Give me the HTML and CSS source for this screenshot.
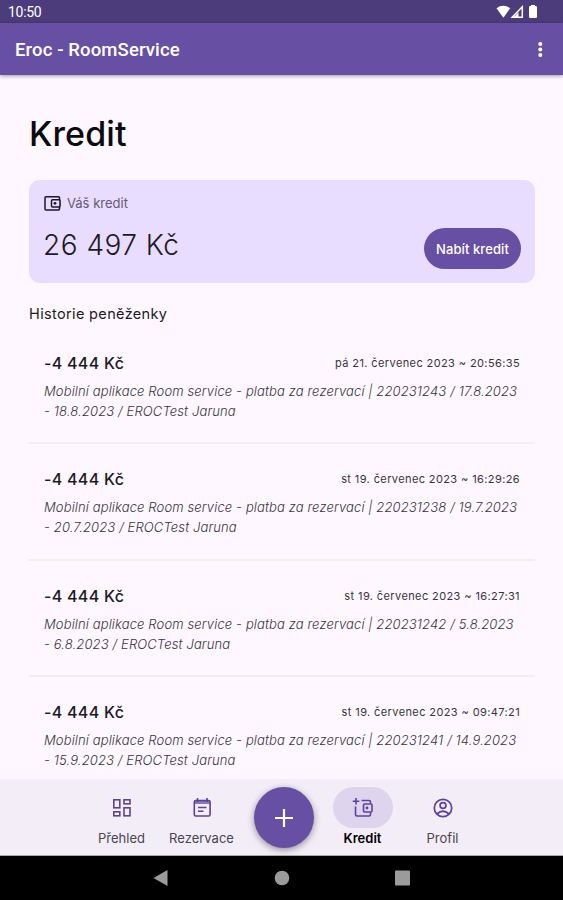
FILE: index.html
```html
<!DOCTYPE html>
<html lang="cs">
<head>
    <meta charset="UTF-8">
    <title>Eroc - RoomService</title>
    <link rel="stylesheet" href="styles.css">
</head>
<body>
    <div class="status-bar">
        <span class="clock">10:50</span>
        <svg class="status-icons" width="44" height="14" viewBox="0 0 44 14">
            <path d="M0.500 3.200Q7.300-1.600 14.200 3.200L7.400 12.800Z"/>
            <path d="M26.300 1.800V12.200H16.200Z" fill="none" stroke="#fff" stroke-width="1.500"/>
            <path d="M22.500 7.200V12H18Z"/>
            <rect x="35" y="0" width="4" height="2"/>
            <rect x="33" y="1" width="8" height="12" rx="1.200"/>
        </svg>
    </div>

    <header class="app-bar">
        <h1>Eroc - RoomService</h1>
        <svg class="menu-icon" width="6" height="18" viewBox="0 0 6 18">
            <circle cx="3.300" cy="3.100" r="2"/>
            <circle cx="3.300" cy="8.600" r="2"/>
            <circle cx="3.300" cy="14.100" r="2"/>
        </svg>
    </header>

    <main class="content">
        <h2>Kredit</h2>

        <section class="card">
            <div>
                <div class="card-label">
                    <svg width="17" height="16" viewBox="0 0 17 16" fill="none" stroke="#1d192b">
                        <rect x="1" y="1.700" width="14.500" height="13.300" rx="1" stroke-width="1.500"/>
                        <rect x="7.500" y="4.700" width="8.500" height="7.300" rx="1" fill="#e8ddff" stroke-width="1.500"/>
                        <circle cx="11" cy="8.300" r="1.400" fill="#1d192b" stroke="none"/>
                    </svg>
                    <span>Váš kredit</span>
                </div>
                <div class="balance">26 497 Kč</div>
            </div>
            <button class="charge">Nabít kredit</button>
        </section>

        <h3>Historie peněženky</h3>

        <ul class="history">
            <li>
                <div class="row">
                    <span class="amount">-4 444 Kč</span>
                    <span class="date">pá 21. červenec 2023 ~ 20:56:35</span>
                </div>
                <p>Mobilní aplikace Room service - platba za rezervací | 220231243 / 17.8.2023<br>- 18.8.2023 / EROCTest Jaruna</p>
            </li>
            <li>
                <div class="row">
                    <span class="amount">-4 444 Kč</span>
                    <span class="date">st 19. červenec 2023 ~ 16:29:26</span>
                </div>
                <p>Mobilní aplikace Room service - platba za rezervací | 220231238 / 19.7.2023<br>- 20.7.2023 / EROCTest Jaruna</p>
            </li>
            <li>
                <div class="row">
                    <span class="amount">-4 444 Kč</span>
                    <span class="date">st 19. červenec 2023 ~ 16:27:31</span>
                </div>
                <p>Mobilní aplikace Room service - platba za rezervací | 220231242 / 5.8.2023<br>- 6.8.2023 / EROCTest Jaruna</p>
            </li>
            <li>
                <div class="row">
                    <span class="amount">-4 444 Kč</span>
                    <span class="date">st 19. červenec 2023 ~ 09:47:21</span>
                </div>
                <p>Mobilní aplikace Room service - platba za rezervací | 220231241 / 14.9.2023<br>- 15.9.2023 / EROCTest Jaruna</p>
            </li>
        </ul>
    </main>

    <nav class="bottom-nav">
        <a class="tab">
            <span class="pill">
                <svg width="20" height="20" viewBox="0 0 20 20" fill="none" stroke="#5b429c" stroke-width="1.600">
                    <rect x="1.800" y="1.800" width="6" height="8"/>
                    <rect x="12" y="1.800" width="6" height="4"/>
                    <rect x="1.800" y="13.800" width="6" height="4"/>
                    <rect x="12" y="9.800" width="6" height="8"/>
                </svg>
            </span>
            <span>Přehled</span>
        </a>
        <a class="tab">
            <span class="pill">
                <svg width="20" height="20" viewBox="0 0 20 20" fill="none" stroke="#5b429c" stroke-width="1.600">
                    <rect x="2.300" y="2.500" width="15.800" height="15.500" rx="1.500"/>
                    <path d="M2.300 4.500H18" stroke-width="3" opacity="0.700"/>
                    <path d="M5.500 0V4M15 0V4M6 9.500H14.500M6 13.300H11.500"/>
                </svg>
            </span>
            <span>Rezervace</span>
        </a>
        <button class="fab">
            <svg width="18" height="18" viewBox="0 0 18 18"><path d="M9 0V18M0 9H18" stroke="#fff" stroke-width="2.200"/></svg>
        </button>
        <a class="tab active">
            <span class="pill">
                <svg width="22" height="20" viewBox="0 0 22 20" fill="none" stroke="#5b429c" stroke-width="1.600">
                    <path d="M4 0V6.500M0.700 3.200H7.300"/>
                    <path d="M9.500 2.500H17Q18.500 2.500 18.500 4V5.500M3.500 8.500V16.500Q3.500 18 5 18H17Q18.500 18 18.500 16.500V14.500"/>
                    <rect x="11.500" y="6" width="8.500" height="8" rx="1"/>
                    <circle cx="15" cy="10" r="1.400" fill="#5b429c" stroke="none"/>
                </svg>
            </span>
            <span>Kredit</span>
        </a>
        <a class="tab">
            <span class="pill">
                <svg width="20" height="20" viewBox="0 0 20 20" fill="none" stroke="#5b429c" stroke-width="1.700">
                    <circle cx="10" cy="10" r="8.700"/>
                    <circle cx="10" cy="7.500" r="2.900"/>
                    <path d="M4 16Q10 10.500 16 16"/>
                </svg>
            </span>
            <span>Profil</span>
        </a>
    </nav>

    <div class="system-nav">
        <svg width="16" height="18" viewBox="0 0 16 18"><path d="M0.500 9L14.500 1V17Z"/></svg>
        <svg width="16" height="16" viewBox="0 0 16 16"><circle cx="8" cy="8" r="7.300"/></svg>
        <svg width="16" height="16" viewBox="0 0 16 16"><rect x="0" y="0.500" width="15" height="15" rx="1"/></svg>
    </div>
</body>
</html>
```

FILE: styles.css
```css
* {
    box-sizing: border-box;
}
body {
    margin: 0;
    height: 900px;
    display: flex;
    flex-direction: column;
    overflow: hidden;
    background-color: #fef7ff;
    color: #1c1b1f;
    font-family: Inter, "Liberation Sans", sans-serif;
}
h1, h2, h3, p, ul {
    margin: 0;
    padding: 0;
}
button {
    border: none;
    padding: 0;
    color: #fff;
    background-color: #6750a4;
    font-family: inherit;
}
svg {
    display: block;
    flex: none;
}

/* Top bars */
.status-bar {
    flex: none;
    display: flex;
    align-items: center;
    justify-content: space-between;
    height: 23px;
    padding: 1px 23px 0 8px;
    background-color: #4d3c7b;
    color: #fff;
}
.clock {
    font: 400 14px/22px Roboto, sans-serif;
    letter-spacing: -0.3px;
}
.status-icons {
    fill: #fff;
}
.app-bar {
    flex: none;
    display: flex;
    align-items: center;
    justify-content: space-between;
    height: 52px;
    padding: 2px 20px 0 15px;
    background-color: #6750a4;
    box-shadow: 0 1px 4px rgba(0, 0, 0, 0.4);
    color: #fff;
    z-index: 1;
}
.app-bar h1 {
    font: 500 18.5px/24px Roboto, sans-serif;
    letter-spacing: 0.13px;
}
.menu-icon {
    fill: #fff;
}

/* Content */
.content {
    flex: 1;
    min-height: 0;
    overflow: hidden;
    padding: 38px 28px 0 29px;
}
.content h2 {
    font-size: 34px;
    line-height: 42px;
    font-weight: 500;
    letter-spacing: 0.1px;
    color: #0b0a0c;
}
.card {
    display: flex;
    justify-content: space-between;
    align-items: flex-end;
    height: 103px;
    margin-top: 25px;
    padding: 13px 14px 14px 15px;
    border-radius: 11px;
    background-color: #e8ddff;
}
.card > div {
    align-self: flex-start;
}
.card-label {
    display: flex;
    align-items: center;
    gap: 6px;
    font-size: 13px;
    line-height: 20px;
    color: #625b71;
}
.balance {
    margin: 13px 0 0 -1px;
    font-size: 28px;
    line-height: 38px;
    font-weight: 300;
    letter-spacing: 0.5px;
}
.charge {
    width: 97px;
    height: 41px;
    border-radius: 21px;
    font-size: 13px;
    font-weight: 500;
    letter-spacing: 0.1px;
}
.content h3 {
    margin-top: 21px;
    font-size: 14.5px;
    line-height: 20px;
    font-weight: 400;
    letter-spacing: 0.35px;
}
.history {
    list-style: none;
}
.history li {
    height: 116.3px;
    padding: 25px 15px 0;
    border-bottom: 2px solid #f2ecf4;
}
.history li:first-child {
    height: 120.4px;
    padding-top: 29px;
}
.row {
    display: flex;
    justify-content: space-between;
    align-items: center;
    height: 20px;
}
.amount {
    font-size: 16px;
    font-weight: 500;
    letter-spacing: 0.3px;
}
.date {
    font-size: 11px;
    letter-spacing: 0.39px;
    color: #37343b;
}
.history p {
    margin-top: 8px;
    font-size: 13px;
    line-height: 20px;
    font-style: italic;
    font-weight: 300;
    letter-spacing: 0.13px;
    color: #38353c;
    white-space: nowrap;
}

/* Bottom navigation */
.bottom-nav {
    flex: none;
    display: flex;
    justify-content: center;
    height: 77px;
    padding: 8px 0 0 1px;
    background-color: #f3edf7;
    border-bottom: 1px solid #aaa6ad;
}
.tab {
    display: flex;
    flex-direction: column;
    align-items: center;
    width: 80px;
    font-size: 13px;
    line-height: 18px;
    color: #49454f;
}
.pill {
    display: flex;
    align-items: center;
    justify-content: center;
    width: 60px;
    height: 41px;
    margin-bottom: 1px;
    border-radius: 21px;
}
.active {
    color: #000;
    font-weight: 600;
}
.active .pill {
    background-color: #ded4ee;
}
.fab {
    display: flex;
    align-items: center;
    justify-content: center;
    width: 60px;
    height: 61px;
    margin: 0 9px 0 12px;
    border-radius: 50%;
    box-shadow: 0 2px 7px rgba(0, 0, 0, 0.4);
}

/* Android buttons */
.system-nav {
    flex: none;
    display: flex;
    align-items: center;
    justify-content: center;
    gap: 105px;
    height: 44px;
    background-color: #000;
    fill: #9b9b9b;
}
```
